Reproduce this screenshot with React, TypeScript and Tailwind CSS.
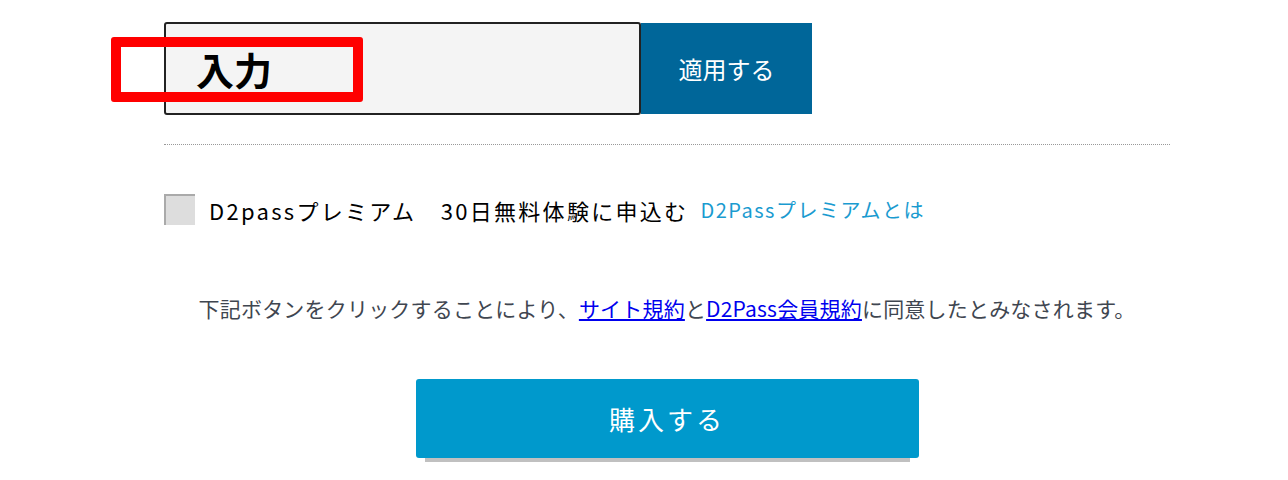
const jp = { fontFamily: '"Noto Sans CJK JP", "Noto Sans", sans-serif' };

export default function App() {
  return (
    <div className="w-full h-[480px] bg-white overflow-hidden" style={jp}>
      <div className="ml-[164px] w-[1006px]">
        {/* coupon row */}
        <div className="relative flex pt-[22px]">
          <div className="w-[477px] h-[93px] border-2 border-[#222] rounded-[3px] bg-[#f4f4f4] flex items-center pl-[30px]">
            <span className="text-[38px] font-bold text-black leading-none">入力</span>
          </div>
          <button className="w-[171px] h-[91px] mt-[1px] bg-[#006699] text-white text-[24px] leading-none">
            適用する
          </button>
          <div className="absolute left-[-53px] top-[37px] w-[252px] h-[65px] border-[10px] border-[#ff0000] rounded-[3px]" />
        </div>

        <div className="mt-[29px] border-t border-dotted border-[#999]" />

        {/* premium checkbox */}
        <div className="flex items-center mt-[49px] h-[31px]">
          <div className="w-[31px] h-[31px] bg-[#dddddd] border-t-2 border-l-2 border-[#aaa]" />
          <span className="ml-[14px] text-[22px] tracking-[2.3px] text-black leading-none">
            D2passプレミアム　30日無料体験に申込む
          </span>
          <a className="ml-[12px] text-[20px] tracking-[1.5px] text-[#1a9bd0] leading-none">D2Passプレミアムとは</a>
        </div>

        {/* agreement */}
        <p className="mt-[73px] text-center text-[21px] tracking-[0.2px] text-[#3f4650] leading-none">
          下記ボタンをクリックすることにより、
          <a className="text-[#0000ee] underline">サイト規約</a>と
          <a className="text-[#0000ee] underline">D2Pass会員規約</a>
          に同意したとみなされます。
        </p>

        {/* purchase */}
        <div className="flex justify-center mt-[60px]">
          <button className="w-[503px] h-[79px] bg-[#0099cc] rounded-[3px] text-white text-[26px] tracking-[3px] shadow-[0_13px_0_-9px_#c0c0c0]">
            購入する
          </button>
        </div>
      </div>
    </div>
  );
}
